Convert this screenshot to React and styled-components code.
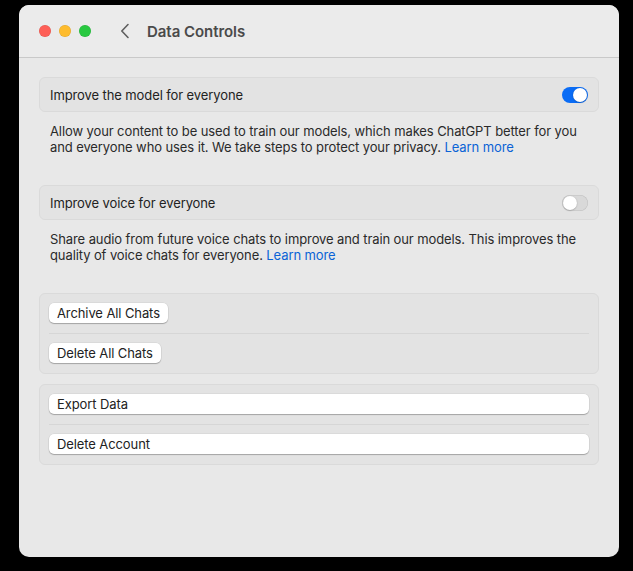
import React from 'react'
import styled, { createGlobalStyle } from 'styled-components'

const GlobalStyle = createGlobalStyle`
  html, body {
    margin: 0;
    padding: 0;
    background: #000;
  }
  body {
    font-family: "Inter", "Liberation Sans", sans-serif;
    -webkit-font-smoothing: antialiased;
  }
`

const Page = styled.div`
  width: 633px;
  height: 571px;
  padding: 5px 0 0 19px;
  box-sizing: border-box;
  background: #000;
`

const Window = styled.div`
  width: 600px;
  height: 552px;
  background: #e8e8e8;
  border-radius: 10px;
  overflow: hidden;
  display: flex;
  flex-direction: column;
`

const TitleBar = styled.div`
  height: 52px;
  flex: none;
  display: flex;
  align-items: center;
  padding-left: 20px;
  border-bottom: 1px solid #c9c9c9;
  background: #ebebeb;
`

const Lights = styled.div`
  display: flex;
  gap: 8px;
`

const Light = styled.span`
  width: 12px;
  height: 12px;
  border-radius: 50%;
  background: ${p => p.$color};
  box-shadow: inset 0 0 0 0.5px rgba(0, 0, 0, 0.12);
`

const BackButton = styled.button`
  margin-left: 29px;
  padding: 0;
  border: 0;
  background: none;
  display: flex;
  align-items: center;
  cursor: pointer;
`

const Title = styled.h1`
  margin: 0 0 0 17px;
  font-size: 15px;
  font-weight: 600;
  color: #4a4a4a;
  letter-spacing: -0.05px;
`

const Content = styled.div`
  padding: 19px 20px 20px;
  display: flex;
  flex-direction: column;
  font-size: 13px;
  letter-spacing: -0.1px;
`

const Card = styled.div`
  height: 35px;
  box-sizing: border-box;
  display: flex;
  align-items: center;
  justify-content: space-between;
  padding: 0 10px;
  background: #e3e3e3;
  border: 1px solid #dadada;
  border-radius: 6px;
  color: #222;
`

const Description = styled.p`
  margin: 11px 0 30px;
  padding: 0 11px;
  line-height: 16px;
  color: #2a2a2a;
`

const Link = styled.a`
  color: #0b63d6;
  text-decoration: none;
`

const Toggle = styled.span`
  position: relative;
  width: 26px;
  height: 16px;
  border-radius: 8px;
  background: ${p => (p.$on ? '#0a6cf5' : '#d9d9d9')};
  box-shadow: ${p => (p.$on ? 'none' : 'inset 0 0 0 0.5px rgba(0,0,0,0.12)')};

  &::after {
    content: "";
    position: absolute;
    top: 1px;
    left: ${p => (p.$on ? '11px' : '1px')};
    width: 14px;
    height: 14px;
    border-radius: 50%;
    background: #fff;
    box-shadow: 0 0.5px 1.5px rgba(0, 0, 0, 0.3);
  }
`

const Group = styled.div`
  background: #e3e3e3;
  border: 1px solid #dadada;
  border-radius: 6px;
  padding: 0 9px;
  margin-bottom: 10px;
`

const Row = styled.div`
  display: flex;
  padding: 9px 0 10px;

  & + & {
    border-top: 1px solid #d6d6d6;
  }
`

const Button = styled.button`
  height: 20px;
  flex: ${p => (p.$wide ? 1 : 'none')};
  padding: 0 8px;
  border: 0;
  border-radius: 5px;
  background: #fff;
  box-shadow: 0 0 0 0.5px rgba(0, 0, 0, 0.08), 0 1px 1px rgba(0, 0, 0, 0.25);
  font-family: inherit;
  font-size: 13px;
  letter-spacing: -0.1px;
  color: #222;
  text-align: left;
  cursor: pointer;
`

const Chevron = () => (
  <svg width="10" height="16" viewBox="0 0 10 16" fill="none">
    <path d="M8 1.5 L1.8 8 L8 14.5" stroke="#5f5f5f" strokeWidth="1.6" strokeLinecap="round" strokeLinejoin="round" />
  </svg>
)

export default function App() {
  return (
    <Page>
      <GlobalStyle />
      <Window>
        <TitleBar>
          <Lights>
            <Light $color="#fe5f57" />
            <Light $color="#febc2e" />
            <Light $color="#28c840" />
          </Lights>
          <BackButton><Chevron /></BackButton>
          <Title>Data Controls</Title>
        </TitleBar>
        <Content>
          <Card>
            Improve the model for everyone
            <Toggle $on />
          </Card>
          <Description>
            Allow your content to be used to train our models, which makes ChatGPT better for you<br />
            and everyone who uses it. We take steps to protect your privacy. <Link href="#">Learn more</Link>
          </Description>
          <Card>
            Improve voice for everyone
            <Toggle />
          </Card>
          <Description>
            Share audio from future voice chats to improve and train our models. This improves the<br />
            quality of voice chats for everyone. <Link href="#">Learn more</Link>
          </Description>
          <Group>
            <Row><Button>Archive All Chats</Button></Row>
            <Row><Button>Delete All Chats</Button></Row>
          </Group>
          <Group>
            <Row><Button $wide>Export Data</Button></Row>
            <Row><Button $wide>Delete Account</Button></Row>
          </Group>
        </Content>
      </Window>
    </Page>
  )
}
